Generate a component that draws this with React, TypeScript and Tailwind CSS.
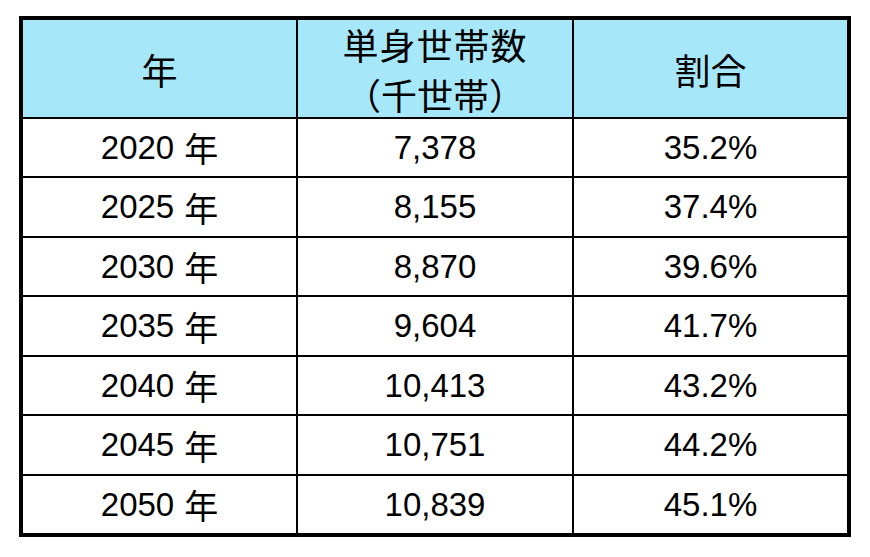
const rows = [
  ["2020", "7,378", "35.2%"],
  ["2025", "8,155", "37.4%"],
  ["2030", "8,870", "39.6%"],
  ["2035", "9,604", "41.7%"],
  ["2040", "10,413", "43.2%"],
  ["2045", "10,751", "44.2%"],
  ["2050", "10,839", "45.1%"],
];

const cjk = { fontFamily: '"Noto Sans CJK JP", sans-serif' };

export default function App() {
  return (
    <div className="w-[870px] h-[557px] bg-white pl-[19px] pt-[16px]">
      <div
        className="w-[832px] border-4 border-black bg-black grid grid-cols-[273px_274px_273px] grid-rows-[97px_repeat(7,57.7px)] gap-x-[2px] gap-y-[1.8px] text-black"
        style={{ fontFamily: '"Liberation Sans", "Noto Sans CJK JP", sans-serif' }}
      >
        <div className="bg-[#a6e7f9] flex items-center justify-center text-[36px]" style={cjk}>
          年
        </div>
        <div
          className="bg-[#a6e7f9] flex flex-col items-center justify-center text-[36px] leading-[50px]"
          style={cjk}
        >
          <span className="tracking-[1px]">単身世帯数</span>
          <span>（千世帯）</span>
        </div>
        <div className="bg-[#a6e7f9] flex items-center justify-center text-[36px]" style={cjk}>
          割合
        </div>
        {rows.map(([year, count, ratio]) => (
          <div key={year} className="contents">
            <div className="bg-white flex items-center justify-center text-[33px]">
              <span>{year}</span>
              <span className="ml-[10px] text-[34px]" style={cjk}>
                年
              </span>
            </div>
            <div className="bg-white flex items-center justify-center text-[33px]">{count}</div>
            <div className="bg-white flex items-center justify-center text-[33px]">{ratio}</div>
          </div>
        ))}
      </div>
    </div>
  );
}
